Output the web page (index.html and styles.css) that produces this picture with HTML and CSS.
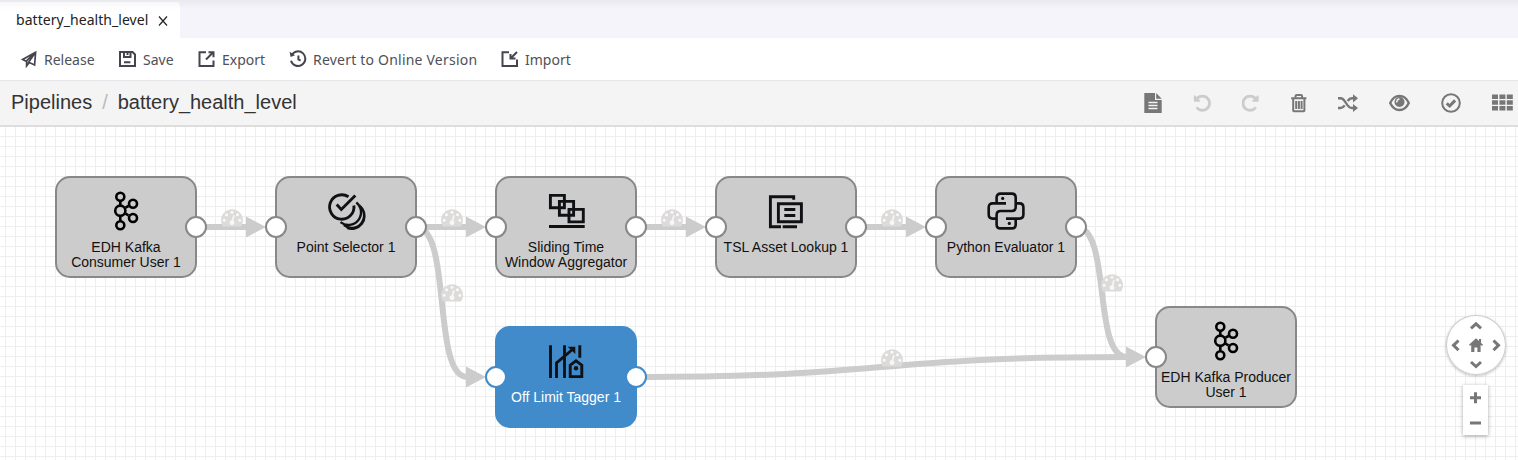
FILE: index.html
```html
<!DOCTYPE html>
<html lang="en">
<head>
<meta charset="utf-8">
<title>battery_health_level</title>
<link rel="stylesheet" href="styles.css">
</head>
<body>
<header class="tabs">
  <div class="tab"><span class="tab-name">battery_health_level</span>
    <svg class="tab-close" width="10" height="10" viewBox="0 0 10 10"><path d="M1 .5l8 9M9 .5l-8 9"/></svg>
  </div>
</header>
<nav class="actions">
  <button class="action release"><svg width="18" height="18" viewBox="0 0 18 18"><path d="M15.600 2.200L2.600 9.400l3.600 1.800L15.400 2.400l-6.800 9.800 6 2.800zM6.600 11.400v4.500l2.300-3"/></svg><span>Release</span></button>
  <button class="action save"><svg width="18" height="18" viewBox="0 0 18 18"><path d="M1 2h12.500l2.500 2.500V16H1zM5 2v5h6.500V2M8.500 2v3M5 12.200h6.400"/></svg><span>Save</span></button>
  <button class="action export"><svg width="18" height="18" viewBox="0 0 18 18"><path d="M8 2.200H1.500V16h14v-5.500M8 9.500l6.500-6.500M10.500 2.200h5v5"/></svg><span>Export</span></button>
  <button class="action revert"><svg width="18" height="18" viewBox="0 0 18 18"><path d="M2.600 5.200a7.300 7.300 0 1 1-.6 5.500M9.400 5.500v4l2.200 1.200"/><path class="solid" d="M.6 1.800l1 5.300 4.500-1.800z"/></svg><span>Revert to Online Version</span></button>
  <button class="action import"><svg width="18" height="18" viewBox="0 0 18 18"><path d="M8 2.200H1.500V16h14.500V9.500M16 2L10 8M9.500 4v4.500h5"/></svg><span>Import</span></button>
</nav>
<div class="pathbar">
  <div class="crumbs"><span>Pipelines</span><span class="slash">/</span><span>battery_health_level</span></div>
  <div class="tools">
    <svg width="18" height="22" viewBox="0 0 18 22"><path d="M.3 1h10.700v7h6.700v13H.3z"/><path d="M12.200 1l5.500 5.700h-5.500z"/><path class="knock" d="M4.500 10.500h9M4.500 13.500h9M4.500 16.500h9"/></svg>
    <svg class="off" width="18" height="18" viewBox="0 0 18 18"><use href="#undo"/></svg>
    <svg class="off" width="18" height="18" viewBox="0 0 18 18"><use href="#undo" transform="matrix(-1 0 0 1 17.500 0)"/></svg>
    <svg width="16" height="20" viewBox="0 0 16 20"><path class="line" d="M.2 5.200h15.200M4.500 5V3.200Q4.500 2 5.700 2h4.200q1.200 0 1.200 1.200V5M2.200 6v11.500q0 .8.800.8h9.600q.8 0 .8-.8V6M5.200 8v8M7.900 8v8M10.600 8v8"/></svg>
    <svg width="20" height="20" viewBox="0 0 20 20"><path class="line thick" d="M0 5.300h2.500C8 5.300 8 15 14 15h3M0 15h2.500c2 0 3.200-1.200 4.200-2.700M9.700 8c1-1.500 2.300-2.700 4.300-2.700h3"/><path d="M15 1.200l5 4.100-5 4.100zM15 10.900l5 4.100-5 4.100z"/></svg>
    <svg width="21" height="18" viewBox="0 0 21 18"><path class="line thick" d="M1.200 9C5.500-.5 15.500-.5 19.800 9 15.500 18.300 5.500 18.300 1.200 9z"/><circle cx="10.500" cy="8" r="5"/><path class="glint" d="M7.700 8.500Q7.700 5.200 10.500 5"/></svg>
    <svg width="20" height="20" viewBox="0 0 20 20"><circle class="line" cx="10" cy="10" r="8.800"/><path class="line heavy" d="M5.700 10.300l3 2.700 5.400-5.600"/></svg>
    <svg width="21" height="17" viewBox="0 0 21 17"><path d="M0 .5h6v4.500H0zM7.400.5h6v4.500h-6zM14.800.5h6v4.500h-6zM0 6.300h6v4.500H0zM7.400 6.300h6v4.500h-6zM14.800 6.300h6v4.500h-6zM0 12.100h6v4.500H0zM7.400 12.100h6v4.500h-6zM14.800 12.100h6v4.500h-6z"/></svg>
  </div>
</div>
<main class="canvas">
  <svg class="wires" width="1518" height="333" viewBox="0 127 1518 333">
    <defs>
      <path id="arrow" d="M-20-10.500L0 0l-20 10.500z"/>
      <g id="gauge"><path class="dial" d="M-9 16.500A10 10 0 1 1 9 16.500z"/><path transform="scale(.01228) translate(-896 -256)" d="M384 1152q0-53-37.500-90.500t-90.500-37.500-90.500 37.500-37.500 90.500 37.500 90.500 90.500 37.500 90.500-37.500 37.500-90.500zm192-448q0-53-37.500-90.500t-90.500-37.500-90.500 37.500-37.500 90.500 37.500 90.500 90.500 37.500 90.500-37.500 37.500-90.500zm428 481l101-382q6-26-7.500-48.500t-38.500-29.500-48 6.500-30 39.500l-101 382q-60 5-107 43.500t-63 98.500q-20 77 20 146t117 89 146-20 89-117q16-60-6-117t-72-91zm660-33q0-53-37.500-90.500t-90.500-37.500-90.500 37.500-37.500 90.500 37.500 90.500 90.500 37.500 90.500-37.500 37.500-90.500zm-640-640q0-53-37.500-90.500t-90.500-37.500-90.500 37.500-37.500 90.500 37.500 90.500 90.500 37.500 90.500-37.500 37.500-90.500zm448 192q0-53-37.500-90.500t-90.500-37.500-90.500 37.500-37.500 90.500 37.500 90.500 90.500 37.500 90.500-37.500 37.500-90.500zm320 448q0 261-141 483-19 29-54 29h-1402q-35 0-54-29-141-221-141-483 0-182 71-348t191-286 286-191 348-71 348 71 286 191 191 286 71 348z"/></g>
      <path id="undo" transform="scale(.0111) translate(-50 -70)" d="M1664 896q0 156-61 298t-164 245-245 164-298 61q-172 0-327-72.500t-264-204.500q-7-10-6.500-22.500t8.500-20.500l137-138q10-9 25-9 16 2 23 12 73 95 179 147t225 52q104 0 198.500-40.500t163.500-109.500 109.500-163.500 40.500-198.500-40.500-198.500-109.500-163.500-163.500-109.500-198.500-40.500q-98 0-188 35.500t-160 101.500l137 138q31 30 14 69-17 40-59 40h-448q-26 0-45-19t-19-45v-448q0-42 40-59 39-17 69 14l130 129q107-101 244.500-156.500t284.500-55.500q156 0 298 61t245 164 164 245 61 298z"/>
      <g id="kafka"><path d="M14.300 11v4M14.300 26v5M19.500 17.700l3-1.700M19.500 23.700l3 1.700"/><circle cx="14.300" cy="6.700" r="4"/><circle cx="14.300" cy="20.700" r="5.100"/><circle cx="14.300" cy="35.300" r="4"/><circle cx="27" cy="13.700" r="4"/><circle cx="27" cy="28" r="4"/></g>
    </defs>
    <g class="links">
      <path d="M196 227h51M416 227h51M636 227h51M856 227h51"/>
      <path d="M416 227C452 227 432 377 467 377"/>
      <path d="M1076 227C1112 227 1092 357 1127 357"/>
      <path d="M636 377C896 377 866 357 1127 357"/>
    </g>
    <g class="arrows">
      <use href="#arrow" x="266" y="227"/><use href="#arrow" x="486" y="227"/><use href="#arrow" x="706" y="227"/><use href="#arrow" x="926" y="227"/><use href="#arrow" x="486" y="377"/><use href="#arrow" x="1146" y="357"/>
    </g>
    <g class="gauges">
      <use href="#gauge" x="232" y="209.300"/><use href="#gauge" x="452" y="209.300"/><use href="#gauge" x="672" y="209.300"/><use href="#gauge" x="892" y="209.300"/><use href="#gauge" x="452" y="284.300"/><use href="#gauge" x="1112" y="274.300"/><use href="#gauge" x="892" y="349.300"/>
    </g>
  </svg>

  <section class="node n1"><svg class="glyph kafka" width="40" height="42" viewBox="0 0 40 42"><use href="#kafka"/></svg><p>EDH Kafka<br>Consumer User 1</p><i class="port out"></i></section>
  <section class="node n2"><svg class="glyph" width="40" height="42" viewBox="0 0 40 42"><path d="M22.500 6.800A12.200 12.200 0 1 0 27.900 15.500M10.700 14.500L15.300 19.500 29.300 5.500"/><path class="thin" d="M30.300 12.500A12.500 12.500 0 0 1 14.500 32.200M33.300 15.500A12.500 12.500 0 0 1 17.800 35.200M36 18.500A12.800 12.800 0 0 1 21 38"/></svg><p>Point Selector 1</p><i class="port in"></i><i class="port out"></i></section>
  <section class="node n3"><svg class="glyph" width="40" height="42" viewBox="0 0 40 42"><path d="M4.400 5.400h14v12.300h-14zM13.400 11.400h14.200v13.900H13.400zM23 19.400h14.300v12.500H23zM3 36.500h35.700"/></svg><p>Sliding Time<br>Window Aggregator</p><i class="port in"></i><i class="port out"></i></section>
  <section class="node n4"><svg class="glyph" width="40" height="42" viewBox="0 0 40 42"><path d="M27.700 9.700v-3H4.400v30H15M16.700 36.700H31M12.400 13.700h23v18h-23zM18.300 19.500h11M18.300 25.500h11"/></svg><p>TSL Asset Lookup 1</p><i class="port in"></i><i class="port out"></i></section>
  <section class="node n5"><svg class="glyph" width="40" height="42" viewBox="0 0 40 42"><path class="python" d="M20 13.400H6.700q-4 0-4 4v7.200q0 4 4 4h4M10.600 13.400V7.600q0-4 4-4h11.100q4 0 4 4V17q0 4-4 4H14.600q-4 0-4 4v9.400q0 4 4 4h11.100q4 0 4-4v-5.800M29.700 13.400h3.700q4 0 4 4v7.200q0 4-4 4H20"/><circle class="solid" cx="16.700" cy="8.400" r="1.600"/><circle class="solid" cx="23.300" cy="33.400" r="1.600"/></svg><p>Python Evaluator 1</p><i class="port in"></i><i class="port out"></i></section>
  <section class="node selected n6"><svg class="glyph" width="40" height="42" viewBox="0 0 40 42"><path d="M4.500 5.300V38M10.500 38V23L27 9M18.500 5.300V38M33.800 5.300v12.500M24.200 36.600V25.200l5.800-4.300 5.800 4.300v11.400z"/><path class="solid" d="M21.700 6.700H29.300V14z"/><circle class="solid" cx="30" cy="28.300" r="2.200"/></svg><p>Off Limit Tagger 1</p><i class="port in"></i><i class="port out"></i></section>
  <section class="node n7"><svg class="glyph kafka" width="40" height="42" viewBox="0 0 40 42"><use href="#kafka"/></svg><p>EDH Kafka Producer<br>User 1</p><i class="port in"></i></section>

  <aside class="controls">
    <svg class="pan" width="60" height="60" viewBox="0 0 60 60"><path class="chev" d="M25 13.300l5-4.500 5 4.500M25 47l5 4.500 5-4.500M12.500 25.500L7.500 30.300l5 4.800M47.500 25.500l5 4.800-5 4.800"/><path d="M30 23.300l7 6.500-1 1.200-1.400-1.200V37h-3.200v-4.500h-3V37h-3.200v-7.200L24 31l-1-1.200zM33 24h2v4h-2z"/></svg>
    <div class="zoom"><svg width="25" height="50" viewBox="0 0 25 50"><path d="M7 12.700h11M12.500 7.200v11M7 38h11"/></svg></div>
  </aside>
</main>
</body>
</html>
```
FILE: styles.css
```css
* { box-sizing: border-box; }
body { margin: 0; width: 1518px; height: 460px; overflow: hidden; background: #fff; font-family: "Liberation Sans", Arial, sans-serif; }
svg { display: block; flex: none; }

.tabs { height: 38px; padding-top: 2px; background: linear-gradient(#e9e9ef, #f4f4fa 9px); }
.tab { display: flex; align-items: center; width: 180px; height: 36px; padding: 0 0 2px 16px; border-radius: 0 4px 0 0; background: linear-gradient(#f8f8f9, #fff 8px); font: 14px "Noto Sans", sans-serif; color: #222; }
.tab-name { width: 142px; letter-spacing: .05px; white-space: nowrap; }
.tab-close { margin-top: 4px; fill: none; stroke: #222; stroke-width: 1.2; }

.actions { display: flex; align-items: center; height: 43px; padding-left: 20px; border-bottom: 1px solid #e6e6ea; }
.action { display: flex; align-items: center; gap: 6px; flex: none; height: 42px; padding: 0; border: 0; background: none; font: 14px "Noto Sans", sans-serif; color: #505058; white-space: nowrap; }
.action svg { fill: none; stroke: #45454f; stroke-width: 2; }
.release svg { stroke-width: 1.7; }
.action svg .solid { fill: #45454f; stroke: none; }
.release { width: 99px; }
.save { width: 79px; }
.export { width: 91px; }
.revert { width: 212px; letter-spacing: .21px; }

.pathbar { display: flex; align-items: center; justify-content: space-between; height: 46px; padding: 0 5px 2px 11px; border-bottom: 2px solid #ddd; background: #f4f4f4; }
.crumbs { display: flex; font-size: 20px; color: #333; }
.slash { padding: 0 10px; color: #bbb; }
.tools { display: flex; align-items: center; gap: 31px; padding-top: 1px; fill: #777; }
.tools .off { fill: #ccc; }
.tools .line { fill: none; stroke: #777; stroke-width: 2; }
.tools .thick { stroke-width: 2.4; }
.tools .heavy { stroke-width: 3; }
.knock, .glint { fill: none; stroke: #f4f4f4; stroke-width: 1.4; }

.canvas { position: relative; height: 333px; background-color: #fff; background-image: linear-gradient(90deg, #eee 1px, transparent 1px), linear-gradient(#eee 1px, transparent 1px); background-size: 10px 10px; background-position: 5px 9px; }
.links { fill: none; stroke: #ccc; stroke-width: 6; }
.arrows { fill: #ccc; }
.gauges { fill: #dddada; }
.dial { fill: #f8f8f8; }

.node { position: absolute; top: 49px; display: flex; flex-direction: column; align-items: center; width: 142px; height: 102px; padding-top: 12px; border: 2px solid #888; border-radius: 15px; background: #ccc; color: #111; }
.node p { margin: 8px -2px 0; font-size: 14px; line-height: 15px; text-align: center; white-space: nowrap; }
.n1 { left: 55px; }
.n2 { left: 275px; }
.n3 { left: 495px; }
.n4 { left: 715px; }
.n5 { left: 935px; }
.n6 { left: 495px; top: 199px; }
.n7 { left: 1155px; top: 179px; }
.selected { border-color: #428bca; background: #428bca; color: #fff; }
.glyph { fill: none; stroke: #101114; stroke-width: 2.9; }
.glyph .thin { stroke-width: 2.3; }
.glyph .python { stroke-width: 2.6; }
.glyph .solid { fill: #101114; stroke: none; }
.glyph.kafka { stroke: #000; stroke-width: 2.6; }
.port { position: absolute; top: 38px; width: 22px; height: 22px; border: 2px solid #888; border-radius: 50%; background: #fff; }
.port.in { left: -12px; }
.port.out { right: -12px; }
.selected .port { border-color: #428bca; }

.controls { position: absolute; left: 1446px; top: 188px; display: flex; flex-direction: column; gap: 10px; width: 60px; }
.pan { border-radius: 50%; background: #fff; fill: #777; box-shadow: inset 0 0 0 1px #ccc, 0 1px 3px rgba(0,0,0,.25); }
.chev { fill: none; stroke: #777; stroke-width: 3; }
.zoom { width: 25px; height: 50px; margin-left: 17px; background: #fff; box-shadow: 0 1px 4px rgba(0,0,0,.35); }
.zoom svg { fill: none; stroke: #777; stroke-width: 3; }
```
